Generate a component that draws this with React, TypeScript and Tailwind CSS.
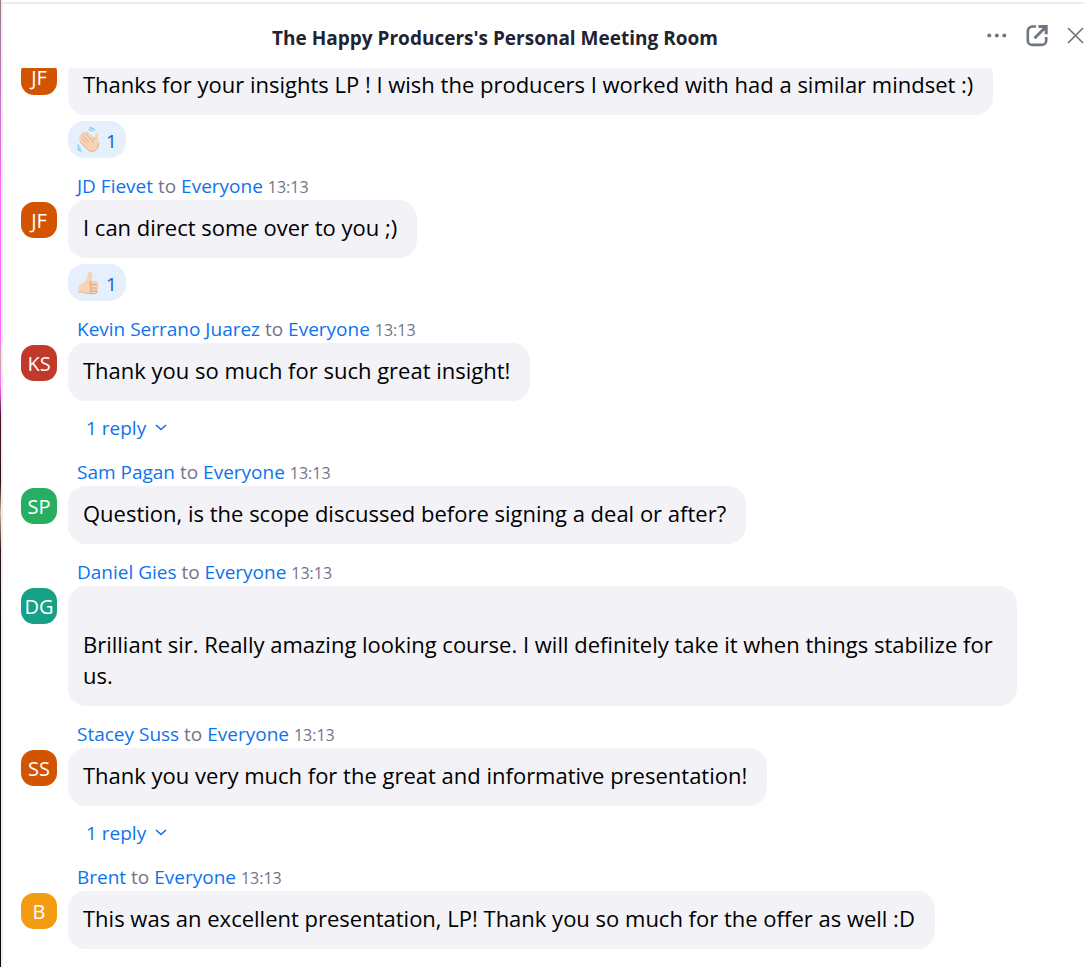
import { clsx } from "clsx";

type Message = {
  id: number;
  sender?: string;
  initials: string;
  color: string;
  text: string;
  reaction?: "wave" | "thumb";
  replies?: number;
};

const messages: Message[] = [
  {
    id: 1,
    initials: "JF",
    color: "bg-[#d35400]",
    text: "Thanks for your insights LP ! I wish the producers I worked with had a similar mindset :)",
    reaction: "wave",
  },
  {
    id: 2,
    sender: "JD Fievet",
    initials: "JF",
    color: "bg-[#d35400]",
    text: "I can direct some over to you ;)",
    reaction: "thumb",
  },
  {
    id: 3,
    sender: "Kevin Serrano Juarez",
    initials: "KS",
    color: "bg-[#c0392b]",
    text: "Thank you so much for such great insight!",
    replies: 1,
  },
  {
    id: 4,
    sender: "Sam Pagan",
    initials: "SP",
    color: "bg-[#27ae60]",
    text: "Question, is the scope discussed before signing a deal or after?",
  },
  {
    id: 5,
    sender: "Daniel Gies",
    initials: "DG",
    color: "bg-[#16a085]",
    text: "\nBrilliant sir. Really amazing looking course. I will definitely take it when things stabilize for us.",
  },
  {
    id: 6,
    sender: "Stacey Suss",
    initials: "SS",
    color: "bg-[#d35400]",
    text: "Thank you very much for the great and informative presentation!",
    replies: 1,
  },
  {
    id: 7,
    sender: "Brent",
    initials: "B",
    color: "bg-[#f39c12]",
    text: "This was an excellent presentation, LP! Thank you so much for the offer as well :D",
  },
];

function WaveIcon() {
  return (
    <svg width="23" height="26" viewBox="0 0 23 26" fill="none" aria-hidden="true">
      <g stroke="#f6d3b3" strokeWidth="3" strokeLinecap="round">
        <path d="M3 12.600 9 18" />
        <path d="M3.400 9 10 16" />
        <path d="M6 6.400 13 14" />
        <path d="M9.600 5.800 16 12" />
      </g>
      <path
        d="M7 15.500 15 8.500l2.800 2.500c.6-1.800.3-3.400.9-4.600.6-1 2.100-.7 2.200.6l.7 9c.2 3.200-1 5.400-2.600 6.900-2.300 2-5.400 2-7.700.2L6.500 18z"
        fill="#f6d3b3"
      />
      <path d="M21.600 16c.2 3.200-1 5.400-2.600 6.900-2.300 2-5.400 2-7.700.2L3 15" stroke="#d9a982" strokeWidth=".9" />
      <path
        d="M4.600 11.600 9.400 16M5.200 8.200l6.200 6.400M8.200 6.200l6.200 6.600M17.800 11c-1.700 1-2.400 2.500-2 4.400"
        stroke="#cfa684"
        strokeWidth=".7"
        strokeLinecap="round"
      />
      <path
        d="M11.800 2.800c1.400-.3 2.600.2 3.400 1.400M13.200.9c2-.2 3.500.7 4.300 2.400M1 17.600c0 1.700.9 3 2.400 3.600M.8 21.200c.6 1.700 1.800 2.600 3.600 2.800"
        stroke="#6fc3dd"
        strokeWidth="1.100"
        strokeLinecap="round"
      />
    </svg>
  );
}

function ThumbIcon() {
  return (
    <svg width="23" height="26" viewBox="0 0 23 26" fill="none" aria-hidden="true">
      <path
        d="M1.500 15.200c3-.6 5.500-2.400 7.300-5.200 1.500-2.300 2-4.200 2.300-6.500.3-2 3.600-1.900 4.100.4.500 2.400-.2 4.700-1 7.100h5c2.400 0 2.700 2.700 1.200 3.500 1.600.9 1.400 2.900 0 3.500 1.100.9.8 2.500-.4 3 .6 1.200-.2 2.600-2 2.600H11.500c-3 0-4.500-1.600-7-1.600h-3z"
        fill="#f6d3b3"
      />
      <path
        d="M1.500 22h3c2.500 0 4 1.600 7 1.600H18c1.800 0 2.600-1.400 2-2.600"
        stroke="#ddb08a"
        strokeWidth="1"
      />
      <path
        d="M14.200 11c-1 .7-1.500 1.500-1.500 2.500M20 14.500h-5.600M20 18h-5.600M19.600 21h-5M13.800 12.800v9.600"
        stroke="#c99f7c"
        strokeWidth=".8"
        strokeLinecap="round"
      />
    </svg>
  );
}

function Header() {
  return (
    <header className="flex h-16 shrink-0 items-center text-[#6e7680]">
      <h1 className="flex-1 pt-1 text-center text-[19px] leading-7 font-bold text-[#222230]">
        The Happy Producers's Personal Meeting Room
      </h1>
      <div className="flex items-center gap-[19px]">
        <button type="button" aria-label="More options" className="cursor-pointer">
          <svg width="20" height="24" viewBox="0 0 20 24" fill="currentColor">
            <circle cx="2.300" cy="11.500" r="2" />
            <circle cx="9.800" cy="11.500" r="2" />
            <circle cx="17.300" cy="11.500" r="2" />
          </svg>
        </button>
        <button type="button" aria-label="Pop out" className="cursor-pointer">
          <svg width="22" height="22" viewBox="0 0 22 22" fill="none" stroke="currentColor" strokeWidth="2.600">
            <path d="M10 1.500H6.300a4.500 4.500 0 0 0-4.500 4.500v9.400a4.500 4.500 0 0 0 4.500 4.500h9.400a4.500 4.500 0 0 0 4.500-4.500V12" />
            <path d="M8.500 13.200 19 2.700M12.500 1.500h7.700v7.700" strokeWidth="3" />
          </svg>
        </button>
        <button type="button" aria-label="Close" className="cursor-pointer">
          <svg width="17" height="18" viewBox="0 0 17 18" fill="none" stroke="currentColor" strokeWidth="1.700">
            <path d="m1 1 15 15M16 1 1 16" />
          </svg>
        </button>
      </div>
    </header>
  );
}

function ChatMessage({ message }: { message: Message }) {
  return (
    <li>
      {message.sender && (
        <p className="mt-[14px] h-7 pl-14 text-[19px] leading-7 text-[#747487]">
          <a href="#" className="text-[#0e72ed]">{message.sender}</a> to{" "}
          <a href="#" className="text-[#0e72ed]">Everyone</a>{" "}
          <time className="text-base">13:13</time>
        </p>
      )}
      <div className="flex items-start gap-[11px]">
        <div
          className={clsx(
            "mt-[2px] flex size-9 shrink-0 items-center justify-center rounded-[13px] pt-[2px] text-xl text-white",
            message.color
          )}
        >
          {message.initials}
        </div>
        <div className="flex min-w-0 flex-col items-start">
          <p className="rounded-[18px] bg-[#f2f2f7] pt-3 pr-5 pb-[15px] pl-[15px] text-[22px] leading-[31px] whitespace-pre-line text-black">
            {message.text}
          </p>
          {message.reaction && (
            <button
              type="button"
              className="mt-[6px] flex h-[37px] cursor-pointer items-center gap-[6px] rounded-2xl bg-[#e6f0fd] px-[9px] text-[19px] text-[#0e5fd8]"
            >
              {message.reaction === "wave" ? <WaveIcon /> : <ThumbIcon />}
              <span className="pt-1">1</span>
            </button>
          )}
          {message.replies && (
            <button
              type="button"
              className="mt-3 flex h-[31px] cursor-pointer items-center gap-[9px] pl-[18px] text-[19px] text-[#0e72ed]"
            >
              {message.replies} reply
              <svg width="12" height="12" viewBox="0 0 12 12" fill="none" stroke="currentColor" strokeWidth="1.600">
                <path d="m1 2 5 4.500L11 2" />
              </svg>
            </button>
          )}
        </div>
      </div>
    </li>
  );
}

export default function App() {
  return (
    <div className="flex h-screen overflow-hidden bg-white font-['Open_Sans','Noto_Sans',sans-serif]">
      {/* Sliver of the shared video behind the panel */}
      <div className="w-px shrink-0 bg-[linear-gradient(#8d8088,#ff66ff_20%,#ff66ff_35%,#c9a9a0_37%,#ff66ff_40%,#4a1030_43%,#2a120c_50%,#c9b0a0_53%,#2a1a12_57%,#0c0a0c_65%)]" />
      <main className="flex min-w-0 flex-1 flex-col border-l-2 border-[#f1edf1]">
        <div className="mt-[2px] h-[2px] shrink-0 bg-[#ececf1]" />
        <Header />
        <div className="min-h-0 flex-1 overflow-hidden pr-[67px] pl-[18px]">
          {/* Scrolled so that the first message is partly hidden */}
          <ul className="-mt-[11px]">
            {messages.map((message) => (
              <ChatMessage key={message.id} message={message} />
            ))}
          </ul>
        </div>
      </main>
    </div>
  );
}
